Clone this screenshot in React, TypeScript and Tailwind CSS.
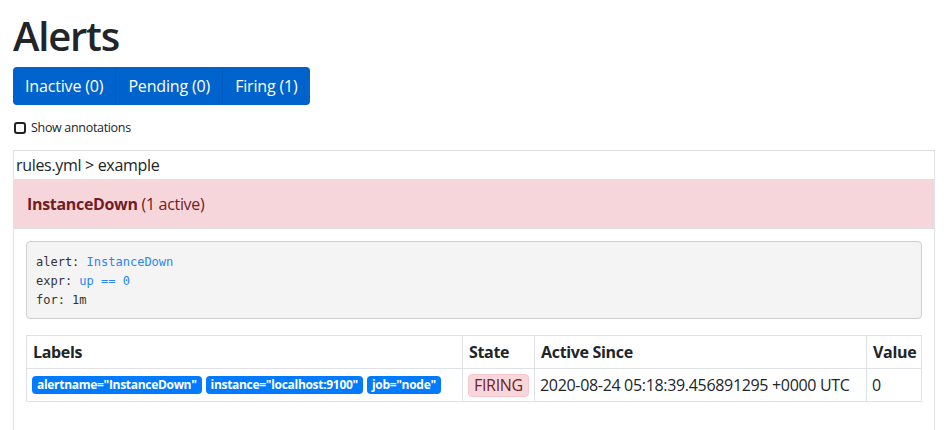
import { useState } from 'react'

const labels = [
    'alertname="InstanceDown"',
    'instance="localhost:9100"',
    'job="node"',
]

export default function App() {
    const [showAnnotations, setShowAnnotations] = useState(false)

    return (
        <div className="min-h-screen bg-white pl-[13px] pr-[15px] pt-[12px] font-['Open_Sans',sans-serif] tracking-[-0.02em] text-[#212529]">
            <h1 className="text-[40px] font-semibold leading-[48px] mb-[7px] tracking-[-0.03em]">Alerts</h1>

            <div className="inline-flex rounded-[4px] overflow-hidden tracking-[-0.01em]">
                <button className="h-[38px] px-3 text-base text-white bg-[#0062cc] border-r border-[#005cbf]">Inactive (0)</button>
                <button className="h-[38px] px-3 text-base text-white bg-[#0062cc] border-r border-[#005cbf]">Pending (0)</button>
                <button className="h-[38px] px-3 text-base text-white bg-[#0062cc]">Firing (1)</button>
            </div>

            <label className="flex items-center gap-[5px] mt-[13px] mb-[12px] text-[12.5px] leading-5 cursor-pointer" onClick={() => setShowAnnotations(!showAnnotations)}>
                <span className="w-[12px] h-[12px] border-2 border-[#222] rounded-[3px] ml-[1px]" />
                <span>Show annotations</span>
            </label>

            <div className="border border-[#e0e0e4] pb-6">
                <div className="px-[2px] py-[2px] text-base leading-6">rules.yml &gt; example</div>
                <div className="bg-[#f6d6da] border-y border-[#e0e0e4] px-[13px] py-3 text-base leading-6 text-[#721c24]">
                    <strong className="font-bold">InstanceDown</strong> (1 active)
                </div>

                <div className="p-3">
                    <pre className="mb-4 bg-[#f4f4f4] border border-[#cfcfcf] rounded-[4px] px-[9px] pt-[11px] pb-[8px] font-['DejaVu_Sans_Mono',monospace] tracking-normal text-[12px] leading-[19px] text-[#333]">
                        <div>alert: <span className="text-[#2a86f0]">InstanceDown</span></div>
                        <div>expr: <span className="text-[#2a86f0]">up == 0</span></div>
                        <div>for: 1m</div>
                    </pre>

                    <table className="w-full table-fixed border-collapse text-base">
                        <thead>
                            <tr>
                                <th className="w-[436px] border border-[#dee2e6] px-[6px] py-1 leading-6 text-left font-bold">Labels</th>
                                <th className="w-[72px] border border-[#dee2e6] px-[6px] py-1 leading-6 text-left font-bold">State</th>
                                <th className="w-[332px] border border-[#dee2e6] px-[6px] py-1 leading-6 text-left font-bold">Active Since</th>
                                <th className="border border-[#dee2e6] px-[6px] py-1 leading-6 text-left font-bold">Value</th>
                            </tr>
                        </thead>
                        <tbody>
                            <tr>
                                <td className="border border-[#dee2e6] px-[5px] py-1 leading-6 whitespace-nowrap">
                                    <div className="flex gap-1">
                                        {labels.map((l) => (
                                            <span key={l} className="bg-[#007bff] text-white text-[12px] font-bold leading-3 px-[5px] py-[3px] rounded-[4px] tracking-[-0.025em]">{l}</span>
                                        ))}
                                    </div>
                                </td>
                                <td className="border border-[#dee2e6] px-[5px] py-1 leading-6">
                                    <span className="inline-block bg-[#f8d7da] border border-[#f5c6cb] text-[#721c24] rounded-[4px] px-[5px] leading-[21px]">FIRING</span>
                                </td>
                                <td className="border border-[#dee2e6] px-[5px] py-1 leading-6 whitespace-nowrap">2020-08-24 05:18:39.456891295 +0000 UTC</td>
                                <td className="border border-[#dee2e6] px-[5px] py-1 leading-6">0</td>
                            </tr>
                        </tbody>
                    </table>
                </div>
            </div>
        </div>
    )
}
